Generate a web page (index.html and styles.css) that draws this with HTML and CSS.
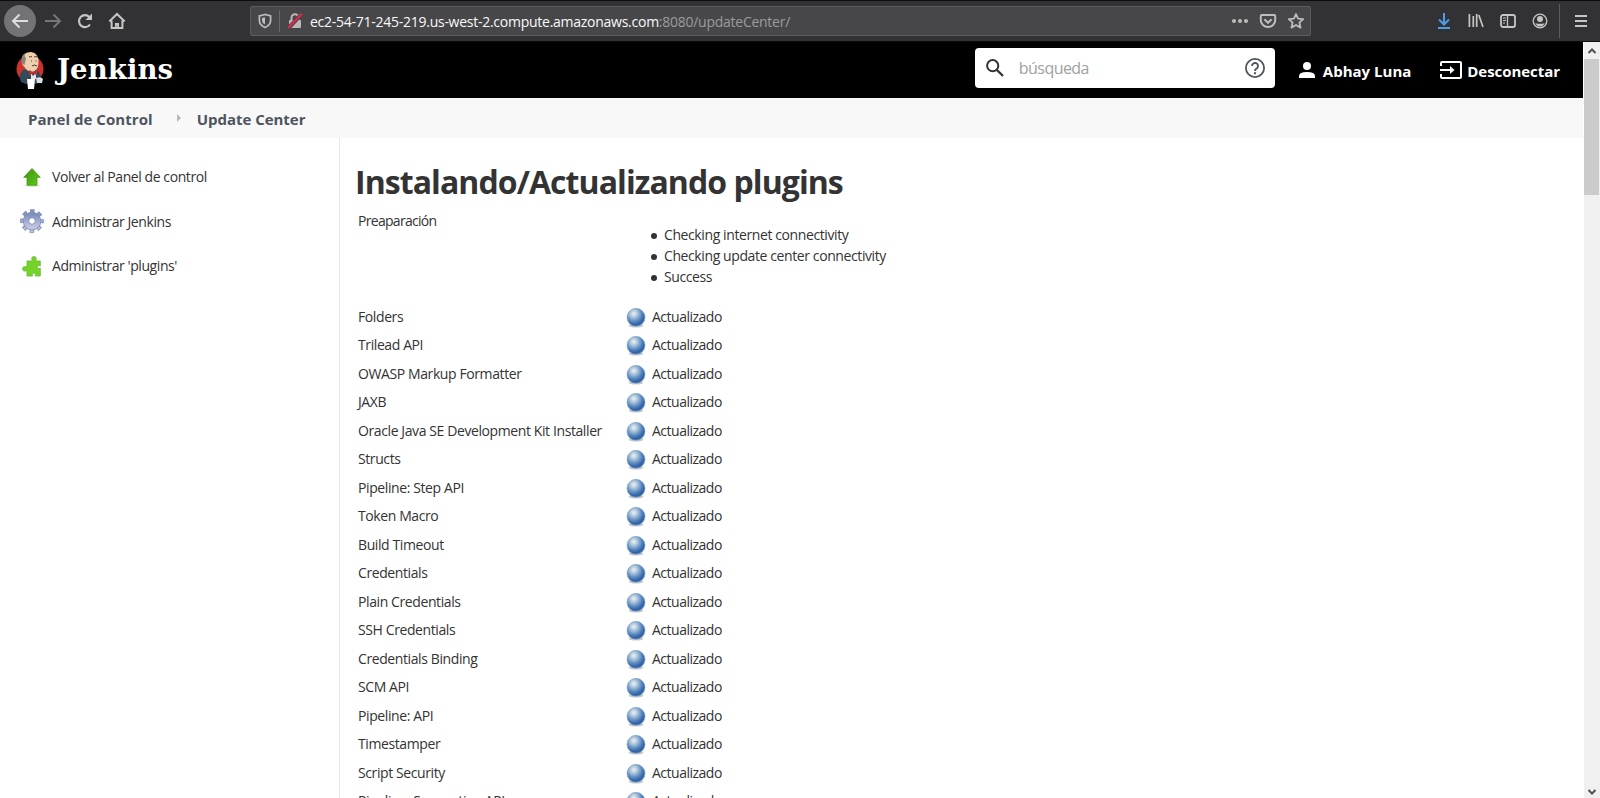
FILE: index.html
```
<!DOCTYPE html>
<html lang="es">
<head>
<meta charset="utf-8">
<title>Update Center [Jenkins]</title>
<link rel="stylesheet" href="styles.css">
</head>
<body>
<svg class="defs" width="0" height="0">
  <defs>
    <radialGradient id="ball" cx="0.38" cy="0.3" r="0.72">
      <stop offset="0" stop-color="#eef3f3"/><stop offset="0.25" stop-color="#b4cbdd"/><stop offset="0.6" stop-color="#5b8ac0"/><stop offset="0.85" stop-color="#2f62a6"/><stop offset="1" stop-color="#4470a8"/>
    </radialGradient>
    <linearGradient id="green" x1="0" y1="0" x2="1" y2="1"><stop offset="0" stop-color="#3f8f13"/><stop offset="0.5" stop-color="#4fae14"/><stop offset="1" stop-color="#5fd00c"/></linearGradient>
    <linearGradient id="gear" x1="0" y1="0" x2="0" y2="1"><stop offset="0" stop-color="#7e92bd"/><stop offset="0.6" stop-color="#a9b0d6"/><stop offset="1" stop-color="#c3c5dd"/></linearGradient>
    <symbol id="blue" viewBox="0 0 20 20"><ellipse cx="10" cy="17.6" rx="7.5" ry="2" fill="#c6c9cc"/><circle cx="10" cy="9.3" r="9" fill="url(#ball)" stroke="#7c9fc6" stroke-width=".6"/></symbol>
  </defs>
</svg>
<div class="browser">
  <div class="nav-buttons">
    <span class="back"><svg width="18" height="16" viewBox="0 0 18 16"><path d="M17 8H2M8.5 1.5 2 8l6.500 6.500" fill="none" stroke="#dededf" stroke-width="2"/></svg></span>
    <svg class="forward" width="18" height="16" viewBox="0 0 18 16"><path d="M1 8h15M9.500 1.500 16 8l-6.500 6.500" fill="none" stroke="#767678" stroke-width="2"/></svg>
    <svg class="reload" width="16" height="16" viewBox="0 0 16 16"><path d="M13 11.500A6 6 0 1 1 12.400 4" fill="none" stroke="#c5c5c6" stroke-width="2.100"/><path d="M15 .5V7H8.500z" fill="#c5c5c6"/></svg>
    <svg class="home" width="18" height="18" viewBox="0 0 18 18"><path d="M1.300 9.500 9 2l7.700 7.500M3.600 8.500V16h10.800V8.500" fill="none" stroke="#c5c5c6" stroke-width="2"/><path d="M7 16v-5h4v5z" fill="#c5c5c6"/><path d="M8.500 14h1" stroke="#38383a"/></svg>
  </div>
  <div class="urlbar">
    <svg class="shield" width="14" height="16" viewBox="0 0 14 16"><path d="M7 1.500 1.400 3v4.500c0 3 2 5.500 5.600 7 3.600-1.500 5.600-4 5.600-7V3z" fill="none" stroke="#bdbdbe" stroke-width="1.700"/><path d="M7 4.200v7.300c-2-1.100-3-2.500-3-4.300V5z" fill="#bdbdbe"/></svg>
    <span class="url-divider"></span>
    <svg class="lock" width="16" height="16" viewBox="0 0 16 16"><path d="M4.500 7V4.800a3.500 3.500 0 0 1 7 0V7" fill="none" stroke="#b9b9ba" stroke-width="2"/><rect x="2" y="7" width="12" height="8" rx="1" fill="#b9b9ba"/><path d="M1.200 15.400 14.700 1" stroke="#474749" stroke-width="4"/><path d="M1.200 15 14.700.8" stroke="#d42a50" stroke-width="2.400"/></svg>
    <span class="url">ec2-54-71-245-219.us-west-2.compute.amazonaws.com<span class="path">:8080/updateCenter/</span></span>
    <span class="url-icons">
      <svg width="18" height="16" viewBox="0 0 18 16"><g fill="#bdbdbe"><circle cx="3" cy="8" r="2"/><circle cx="9" cy="8" r="2"/><circle cx="15" cy="8" r="2"/></g></svg>
      <svg width="18" height="16" viewBox="0 0 18 16"><path d="M2.800 2h12.400q1 0 1 1v4.200a7.200 6.800 0 0 1-14.400 0V3q0-1 1-1z" fill="none" stroke="#bdbdbe" stroke-width="2"/><path d="m5.400 6.300 3.600 3.500 3.600-3.500" fill="none" stroke="#bdbdbe" stroke-width="2"/></svg>
      <svg width="18" height="18" viewBox="0 0 18 18"><path d="m9 2 2.100 4.700 5.100.5-3.800 3.400 1.100 5L9 13l-4.500 2.600 1.100-5L1.800 7.200l5.100-.5z" fill="none" stroke="#bdbdbe" stroke-width="1.800" stroke-linejoin="round"/></svg>
    </span>
  </div>
  <div class="tools">
    <svg width="14" height="18" viewBox="0 0 14 18"><path d="M7 1v11M2 7.500l5 5 5-5" fill="none" stroke="#4f9de8" stroke-width="2"/><path d="M1 16h12" stroke="#4f9de8" stroke-width="2"/></svg>
    <svg width="16" height="16" viewBox="0 0 16 16"><path d="M1.400 1v13M5.300 3v11M8.700 1v13M10.800 2l4.200 12" fill="none" stroke="#c5c5c6" stroke-width="1.700"/></svg>
    <svg width="16" height="16" viewBox="0 0 16 16"><rect x="1" y="2" width="14" height="12" rx="2" fill="none" stroke="#c5c5c6" stroke-width="1.800"/><path d="M7.500 2v12" stroke="#c5c5c6" stroke-width="1.300"/><path d="M3 5h3M3 7.500h3M3 10h2" stroke="#c5c5c6" stroke-width="1.100"/></svg>
    <svg width="16" height="16" viewBox="0 0 16 16"><circle cx="8" cy="8" r="6.800" fill="none" stroke="#c5c5c6" stroke-width="1.300"/><circle cx="8" cy="6" r="3" fill="#c5c5c6"/><path d="M3.300 10.200q4.700 1 9.400 0-1.800 3.400-4.700 3.400t-4.700-3.400z" fill="#c5c5c6"/></svg>
  </div>
  <span class="menu-divider"></span>
  <svg class="menu" width="12" height="14" viewBox="0 0 12 14"><path d="M0 2h12M0 7h12M0 12h12" stroke="#c5c5c6" stroke-width="2"/></svg>
</div>
<div class="viewport">
  <div class="page">
    <header class="header">
      <svg class="butler" width="28" height="38" viewBox="0 0 28 38">
        <ellipse cx="14" cy="18" rx="13.500" ry="13.500" fill="#c9352e"/>
        <path d="M5 31q-3-7 2-12l7-2 8 3q5 6 2 11-9 5-19 0z" fill="#34495a"/>
        <path d="M6 8q1-7 9-7 8 1 7.500 11-.5 8-6.500 9-5-.5-7.500-5Q5 13 6 8z" fill="#efd0ae"/>
        <path d="M5.500 10Q5 4 9 2.500q-1 3 1 5L8.500 14q-3-1-3-4z" fill="#8a8478"/>
        <path d="M13 6q2-1 3 0M18 6q2-1 3 0M15 10h1M19.500 10h1M16 15q2-2 5 0" fill="none" stroke="#4b3931"/>
        <path d="m15 22 2 3 3-3v6h-5z" fill="#e8e6e2"/>
        <path d="m13 19 4 2 4-2v5l-4-1.500-4 1.500z" fill="#c72d2c"/>
        <path d="M11 28h8l-1 10h-6z" fill="#fff"/><path d="M20 27q5-2 7 1l-1 4h-5z" fill="#d9dce0"/>
      </svg>
      <span class="brand">Jenkins</span>
      <div class="search">
        <svg width="18" height="18" viewBox="0 0 18 18"><circle cx="6.700" cy="6.700" r="5.600" fill="none" stroke="#333" stroke-width="2"/><path d="m10.700 10.700 6.300 6.300" stroke="#333" stroke-width="2.300"/></svg>
        <span class="placeholder">búsqueda</span>
        <svg class="help" width="20" height="20" viewBox="0 0 20 20"><circle cx="10" cy="10" r="9.100" fill="none" stroke="#4d545d" stroke-width="1.800"/><path d="M7 8a3 3 0 1 1 5 2.200c-1.200 1-2 1.400-2 2.800" fill="none" stroke="#4d545d" stroke-width="1.900"/><path d="M9 14.200h2v2H9z" fill="#4d545d"/></svg>
      </div>
      <svg class="person" width="16" height="16" viewBox="0 0 16 16"><circle cx="8" cy="4" r="4" fill="#fff"/><path d="M0 16v-2q0-4 8-4t8 4v2z" fill="#fff"/></svg>
      <span class="user">Abhay Luna</span>
      <svg class="exit" width="22" height="18" viewBox="0 0 22 18"><path d="M1 5V2q0-1 1-1h18q1 0 1 1v14q0 1-1 1H2q-1 0-1-1v-3M0 9h12" fill="none" stroke="#fff" stroke-width="2"/><path d="M10 5l4.500 4-4.500 4z" fill="#fff"/></svg>
      <span class="logout">Desconectar</span>
    </header>
    <nav class="crumbs"><span class="crumb1">Panel de Control</span><svg width="4" height="8" viewBox="0 0 4 8"><path d="M0 0l4 4-4 4z" fill="#b8b8b8"/></svg><span class="crumb2">Update Center</span></nav>
    <div class="body">
      <aside class="side">
        <div class="task"><svg width="24" height="24" viewBox="0 0 24 24"><ellipse cx="12" cy="20.500" rx="9" ry="1.500" fill="#e2ebdc"/><path d="M12 3.500 20.300 12.300H17v8H7v-8H3.700z" fill="url(#green)" stroke="#469b1c" stroke-width=".8"/></svg><span>Volver al Panel de control</span></div>
        <div class="task"><svg width="24" height="24" viewBox="0 0 24 24"><circle cx="12" cy="12" r="9.500" fill="none" stroke="#7787b0" stroke-width="4.600" stroke-dasharray="4.200 3.260" stroke-dashoffset="2.100"/><circle cx="12" cy="12" r="9.400" fill="none" stroke="url(#gear)" stroke-width="3.400" stroke-dasharray="2.800 4.583" stroke-dashoffset="1.400"/><circle cx="12" cy="12" r="6" fill="none" stroke="#7787b0" stroke-width="6.500"/><circle cx="12" cy="12" r="6" fill="none" stroke="url(#gear)" stroke-width="5.300"/></svg><span>Administrar Jenkins</span></div>
        <div class="task"><svg width="24" height="24" viewBox="0 0 24 24"><path d="M7 7h5q.5-1-.3-2 0-2.600 2.300-2.600t2.300 2.600q-.9 1-.4 2h4.400v5q-3-1.500-3.300 1 .3 2.500 3.300 1.200V22h-5q1-3-1.500-3t-1.300 3H7v-5.500q-4 1.800-4.500-1.800Q3 11.500 7 13z" fill="#76d32a" stroke="#66b932" stroke-width=".8"/></svg><span>Administrar 'plugins'</span></div>
      </aside>
      <main class="main">
        <h1>Instalando/Actualizando plugins</h1>
        <div class="prep"><span class="label prep-label">Preaparación</span>
          <ul><li>Checking internet connectivity</li><li>Checking update center connectivity</li><li>Success</li></ul>
        </div>
        <div class="rows" id="rows"></div>
      </main>
    </div>
  </div>
  <div class="scrollbar">
    <svg width="16" height="17" viewBox="0 0 16 17"><path d="m4.500 11 3.500-3.500 3.500 3.500" fill="none" stroke="#505050" stroke-width="2"/></svg>
    <span class="thumb"></span>
    <svg class="down" width="16" height="17" viewBox="0 0 16 17"><path d="m4.500 9 3.500 3.500L11.500 9" fill="none" stroke="#505050" stroke-width="2"/></svg>
  </div>
</div>
<script src="rows.js"></script>
</body>
</html>
```
FILE: rows.js
```
const plugins = ["Folders", "Trilead API", "OWASP Markup Formatter", "JAXB", "Oracle Java SE Development Kit Installer", "Structs", "Pipeline: Step API", "Token Macro", "Build Timeout", "Credentials", "Plain Credentials", "SSH Credentials", "Credentials Binding", "SCM API", "Pipeline: API", "Timestamper", "Script Security", "Pipeline: Supporting APIs"];
document.getElementById("rows").innerHTML = plugins.map(name =>
  `<div class="row"><span class="label">${name}</span><svg width="20" height="20"><use href="#blue"/></svg><span class="state">Actualizado</span></div>`).join("");
```
FILE: styles.css
```
* { box-sizing: border-box; }
html, body { height: 100%; }
body { margin: 0; overflow: hidden; display: flex; flex-direction: column; background: #fff; color: #333; font: 14px/21px "Open Sans", "Noto Sans", sans-serif; }
svg { display: block; flex: none; }
span { white-space: nowrap; }
.defs { position: absolute; }
.browser { height: 42px; flex: none; display: flex; align-items: center; background: #323234; border-top: 1px solid #0c0c0d; border-bottom: 1px solid #0c0c0d; }
.nav-buttons { width: 250px; display: flex; align-items: center; }
.back { width: 32px; height: 32px; margin-left: 4px; border-radius: 50%; background: #737375; display: flex; align-items: center; justify-content: center; }
.forward { margin-left: 8px; }
.reload { margin-left: 15px; }
.home { margin-left: 15px; }
.urlbar { width: 1061px; height: 30px; display: flex; align-items: center; background: #474749; border: 1px solid #5c5c5e; border-radius: 2px; }
.shield { margin-left: 7px; }
.url-divider { width: 1px; height: 22px; margin: 0 7px; background: #68686a; }
.url { margin: 1px 0 0 7px; color: #f9f9fa; letter-spacing: -.26px; }
.path { color: #9b9b9d; }
.url-icons { margin-left: auto; margin-right: 5px; display: flex; align-items: center; gap: 10px; }
.tools { margin-left: 126px; display: flex; align-items: center; gap: 16px; }
.tools svg:nth-child(2) { margin-left: 1px; }
.menu-divider { width: 1px; height: 34px; margin-left: 11px; background: #5c5c5e; }
.menu { margin-left: 15px; }
.viewport { flex: 1; min-height: 0; display: flex; overflow: hidden; }
.page { width: 1583px; display: flex; flex-direction: column; }
.header { height: 56px; flex: none; background: #000; color: #fff; display: flex; align-items: center; padding-left: 16px; font-size: 15px; font-weight: 700; }
.butler { margin-top: -1px; }
.brand { margin: -2px 0 0 13px; font: 700 27.500px/40px "DejaVu Serif", serif; letter-spacing: .1px; }
.search { width: 300px; height: 40px; margin: -4px 0 0 auto; background: #fff; border-radius: 4px; display: flex; align-items: center; padding: 0 10px 0 11px; }
.placeholder { margin-left: 15px; font-size: 16px; font-weight: 400; letter-spacing: -.55px; color: #a0a0a0; }
.help { margin-left: auto; }
.person { margin-left: 24px; }
.user { margin: 3px 0 0 8px; }
.exit { margin-left: 29px; }
.logout { margin: 3px 23px 0 5px; letter-spacing: -.05px; }
.crumbs { height: 40px; flex: none; background: #f8f8f8; display: flex; align-items: center; padding: 3px 0 0 28px; font-size: 15px; font-weight: 700; color: #4d545d; }
.crumb1 { letter-spacing: .05px; }
.crumb2 { letter-spacing: -.02px; }
.crumbs svg { margin: -4px 16px 0 24px; }
.body { flex: 1; min-height: 0; display: flex; }
.side { width: 340px; flex: none; border-right: 1px solid #e8e8e8; padding: 27px 0 0 20px; }
.task { height: 24px; margin-bottom: 20.500px; display: flex; align-items: center; gap: 8px; letter-spacing: -.42px; }
.task svg { margin-top: -1px; }
.task span { margin-top: -1px; }
.main { padding-left: 15px; overflow: hidden; flex: 1; letter-spacing: -.4px; }
h1 { margin: 20px 0 1px; font-size: 32px; line-height: 48px; font-weight: 700; letter-spacing: -.93px; }
.prep { display: flex; height: 95.500px; padding: 3px 0 0 3px; }
.label { width: 268px; flex: none; }
.prep-label { letter-spacing: -.7px; }
ul { margin: 14px 0 0; padding-left: 25px; list-style: none; }
li { height: 21px; display: flex; align-items: center; gap: 7px; }
li::before { content: ""; width: 6px; height: 6px; border-radius: 50%; background: #333; margin-top: 2px; }
.row { height: 28.500px; display: flex; align-items: center; padding-left: 3px; }
.row .label { margin-top: -1px; }
.row svg { margin-top: 2px; }
.state { margin: -1px 0 0 6px; letter-spacing: -.5px; }
.scrollbar { width: 17px; background: #f0f0f0; border-left: 1px solid #fff; display: flex; flex-direction: column; }
.thumb { height: 136px; width: 15px; background: #cbcbcb; }
.down { margin-top: auto; }
```
